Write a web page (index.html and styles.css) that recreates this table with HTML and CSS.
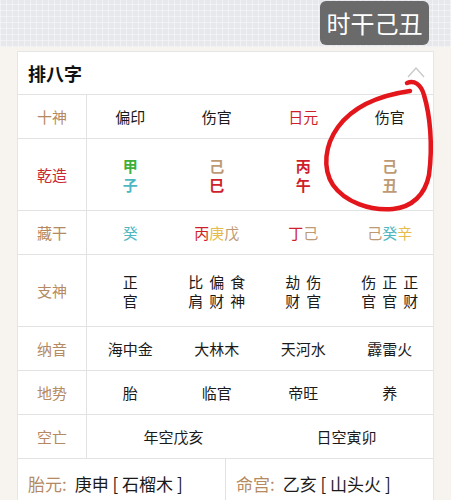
FILE: index.html
```html
<!DOCTYPE html>
<html lang="zh">
<head>
<meta charset="utf-8">
<link rel="stylesheet" href="styles.css">
</head>
<body>
<div class="topbar">
  <div class="badge">时干己丑</div>
</div>
<div class="card">
  <div class="card-head">
    <span class="title">排八字</span>
    <svg class="chev" width="18" height="12" viewBox="0 0 18 12"><path d="M1 11 L9 2 L17 11" fill="none" stroke="#c8c8c8" stroke-width="1.3"/></svg>
  </div>
  <div class="grid">
    <div class="lab row-s">十神</div>
    <div class="cell row-s">偏印</div>
    <div class="cell row-s">伤官</div>
    <div class="cell row-s red">日元</div>
    <div class="cell row-s">伤官</div>

    <div class="lab row-t red">乾造</div>
    <div class="cell row-t"><div class="stack bold"><span class="green">甲</span><span class="cyan">子</span></div></div>
    <div class="cell row-t"><div class="stack bold"><span class="tan">己</span><span class="red">巳</span></div></div>
    <div class="cell row-t"><div class="stack bold"><span class="red">丙</span><span class="red">午</span></div></div>
    <div class="cell row-t"><div class="stack bold"><span class="tan">己</span><span class="tan">丑</span></div></div>

    <div class="lab row-s">藏干</div>
    <div class="cell row-s"><span class="cyan">癸</span></div>
    <div class="cell row-s"><span class="red">丙</span><span class="yellow">庚</span><span class="tan">戊</span></div>
    <div class="cell row-s"><span class="red">丁</span><span class="tan">己</span></div>
    <div class="cell row-s"><span class="tan">己</span><span class="cyan">癸</span><span class="yellow">辛</span></div>

    <div class="lab row-t">支神</div>
    <div class="cell row-t"><div class="gods"><div class="stack"><span>正</span><span>官</span></div></div></div>
    <div class="cell row-t"><div class="gods"><div class="stack"><span>比</span><span>肩</span></div><div class="stack"><span>偏</span><span>财</span></div><div class="stack"><span>食</span><span>神</span></div></div></div>
    <div class="cell row-t"><div class="gods"><div class="stack"><span>劫</span><span>财</span></div><div class="stack"><span>伤</span><span>官</span></div></div></div>
    <div class="cell row-t"><div class="gods"><div class="stack"><span>伤</span><span>官</span></div><div class="stack"><span>正</span><span>官</span></div><div class="stack"><span>正</span><span>财</span></div></div></div>

    <div class="lab row-s">纳音</div>
    <div class="cell row-s">海中金</div>
    <div class="cell row-s">大林木</div>
    <div class="cell row-s">天河水</div>
    <div class="cell row-s">霹雷火</div>

    <div class="lab row-s">地势</div>
    <div class="cell row-s">胎</div>
    <div class="cell row-s">临官</div>
    <div class="cell row-s">帝旺</div>
    <div class="cell row-s">养</div>

    <div class="lab row-s">空亡</div>
    <div class="cell row-s span2">年空戊亥</div>
    <div class="cell row-s span2">日空寅卯</div>
  </div>
  <div class="foot">
    <div class="half"><span class="flab">胎元:</span><span>庚申 [ 石榴木 ]</span></div>
    <div class="half"><span class="flab">命宫:</span><span>乙亥 [ 山头火 ]</span></div>
  </div>
</div>
<svg class="scribble" width="451" height="500" viewBox="0 0 451 500"><path d="M407 83 C414 80, 421 84, 424 95 C430 115, 433 145, 429 175 C425 195, 412 207, 393 209 C370 211, 345 202, 333 185 C322 168, 325 145, 338 127 C352 108, 375 96, 410 91" fill="none" stroke="#e3161c" stroke-width="4.5" stroke-linecap="round"/></svg>
</body>
</html>
```
FILE: styles.css
```css
* { box-sizing: border-box; }
html, body { margin: 0; padding: 0; }
body {
  width: 451px;
  height: 500px;
  overflow: hidden;
  background: #f7f4ef;
  font-family: "Noto Sans CJK SC", "Noto Sans", sans-serif;
  color: #1a1a1a;
  position: relative;
}
.topbar {
  height: 47px;
  background-color: #e7e8ec;
  background-image:
    repeating-linear-gradient(0deg, rgba(255,255,255,0.4) 0 1px, transparent 1px 6px),
    repeating-linear-gradient(90deg, rgba(255,255,255,0.4) 0 1px, transparent 1px 6px);
  display: flex;
  justify-content: flex-end;
  align-items: flex-start;
  padding: 1px 22px 0 0;
}
.badge {
  height: 44px;
  width: 109px;
  background: #6a6a6a;
  border-radius: 6px;
  color: #fff;
  font-size: 24px;
  line-height: 44px;
  text-align: center;
}
.card {
  margin: 4px 17px 0 17px;
  background: #fff;
  border: 1px solid #e6e6e6;
}
.card-head {
  height: 43px;
  display: flex;
  align-items: center;
  justify-content: space-between;
  padding: 0 8px 0 10px;
  border-bottom: 1px solid #e2e2e2;
}
.title {
  font-size: 18px;
  font-weight: bold;
  color: #111;
}
.chev { margin-top: -3px; }
.grid {
  display: grid;
  grid-template-columns: 69px repeat(4, 1fr);
}
.lab, .cell {
  display: flex;
  align-items: center;
  justify-content: center;
  font-size: 15px;
  border-bottom: 1px solid #e2e2e2;
}
.lab {
  color: #b58a62;
  border-right: 1px solid #e2e2e2;
}
.lab.red { color: #c9262e; }
.row-s { height: 44px; }
.row-t { height: 72px; }
.span2 { grid-column: span 2; }
.stack {
  display: flex;
  flex-direction: column;
  align-items: center;
  line-height: 19px;
}
.stack.bold { font-weight: bold; font-size: 15px; }
.gods {
  display: flex;
  gap: 6px;
  font-size: 15px;
}
.red { color: #cf1f2a; }
.green { color: #3daf3a; }
.cyan { color: #4db8c2; }
.tan { color: #be9a74; }
.yellow { color: #e6bd4c; }
.foot {
  display: flex;
  height: 50px;
}
.half {
  flex: 1;
  display: flex;
  align-items: center;
  padding-left: 10px;
  padding-bottom: 2px;
  font-size: 17px;
  color: #1a1a1a;
}
.half + .half { border-left: 1px solid #e2e2e2; }
.flab { color: #b58a62; margin-right: 8px; }
.scribble {
  position: absolute;
  left: 0;
  top: 0;
  pointer-events: none;
}
```
